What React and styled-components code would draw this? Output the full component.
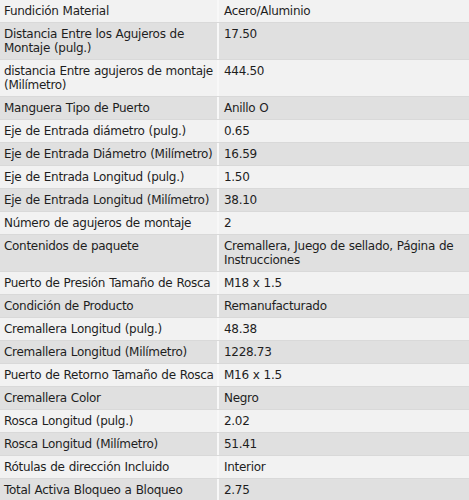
import React from 'react';
import styled, { createGlobalStyle } from 'styled-components';

const GlobalStyle = createGlobalStyle`
  body {
    margin: 0;
    background: #ffffff;
    font-family: Verdana, "DejaVu Sans", sans-serif;
  }
`;

const specs = [
  ['Fundición Material', 'Acero/Aluminio'],
  ['Distancia Entre los Agujeros de Montaje (pulg.)', '17.50'],
  ['distancia Entre agujeros de montaje (Milímetro)', '444.50'],
  ['Manguera Tipo de Puerto', 'Anillo O'],
  ['Eje de Entrada diámetro (pulg.)', '0.65'],
  ['Eje de Entrada Diámetro (Milímetro)', '16.59'],
  ['Eje de Entrada Longitud (pulg.)', '1.50'],
  ['Eje de Entrada Longitud (Milímetro)', '38.10'],
  ['Número de agujeros de montaje', '2'],
  ['Contenidos de paquete', 'Cremallera, Juego de sellado, Página de Instrucciones'],
  ['Puerto de Presión Tamaño de Rosca', 'M18 x 1.5'],
  ['Condición de Producto', 'Remanufacturado'],
  ['Cremallera Longitud (pulg.)', '48.38'],
  ['Cremallera Longitud (Milímetro)', '1228.73'],
  ['Puerto de Retorno Tamaño de Rosca', 'M16 x 1.5'],
  ['Cremallera Color', 'Negro'],
  ['Rosca Longitud (pulg.)', '2.02'],
  ['Rosca Longitud (Milímetro)', '51.41'],
  ['Rótulas de dirección Incluido', 'Interior'],
  ['Total Activa Bloqueo a Bloqueo', '2.75'],
];

const SpecTable = styled.div`
  width: 469px;
  display: flex;
  flex-direction: column;
`;

const Row = styled.div`
  display: grid;
  grid-template-columns: 217px 1fr;
  background: ${(p) => (p.$dark ? '#e0e0e0' : '#f2f2f2')};
  border-bottom: 1px solid #d9d9d9;
`;

const Cell = styled.div`
  padding: 4px 3px 4px 4px;
  font-size: 12px;
  letter-spacing: -0.3px;
  word-spacing: 0.5px;
  line-height: 14px;
  color: #1e1e1e;
  & + & {
    border-left: 2px solid #f8f8f8;
    padding-left: 5px;
  }
`;

const App = () => {
  return (
    <>
      <GlobalStyle />
      <SpecTable>
        {specs.map(([label, value], index) => (
          <Row key={index} $dark={index % 2 === 1}>
            <Cell>{label}</Cell>
            <Cell>{value}</Cell>
          </Row>
        ))}
      </SpecTable>
    </>
  );
};

export default App;
